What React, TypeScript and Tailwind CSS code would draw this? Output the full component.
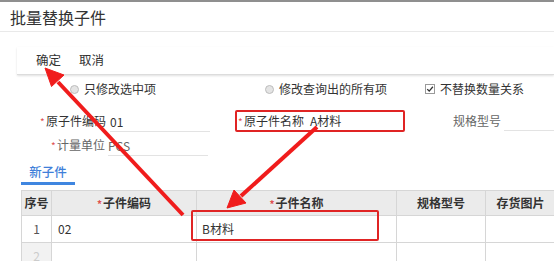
import React from 'react'

const font = { fontFamily: '"Noto Sans CJK SC", "Noto Sans", sans-serif' }

function Radio() {
  return <span className="inline-block w-[9px] h-[9px] rounded-full border border-[#bdbdbd] bg-[#e4e4e4]" />
}

function Checkbox() {
  return (
    <span className="inline-flex items-center justify-center w-[10px] h-[10px] border border-[#9a9a9a] bg-white">
      <svg viewBox="0 0 10 10" className="w-[8px] h-[8px]">
        <path d="M1.5 5.2 L4 7.6 L8.6 2.2" fill="none" stroke="#333" strokeWidth="1.6" />
      </svg>
    </span>
  )
}

function Star() {
  return <span className="text-[#e05050] text-[10px] w-[6px]">*</span>
}

function Arrows() {
  return (
    <svg className="absolute left-0 top-0 pointer-events-none" width="554" height="261">
      <g fill="#f01c1c" stroke="#f01c1c" strokeLinejoin="round">
        <line x1="183" y1="215" x2="58" y2="82" strokeWidth="4" />
        <polygon points="45,68 64,75 51.5,86.5" strokeWidth="1" />
        <line x1="317" y1="127" x2="241" y2="196" strokeWidth="4" />
        <polygon points="227,208 234,190 246,203" strokeWidth="1" />
      </g>
    </svg>
  )
}

export default function App() {
  return (
    <div className="relative w-[554px] h-[261px] overflow-hidden bg-white text-[#333]" style={font}>
      <div className="h-[2px] bg-[#8f8f8f]" />
      {/* Title */}
      <div className="h-[30px] pl-[10px] flex items-center text-[16px] border-b border-[#e9e9e9]">
        批量替换子件
      </div>

      {/* Toolbar */}
      <div className="ml-[17px] mt-[15px] h-[28px] pl-[19px] flex items-center gap-[18px] text-[12.5px] border-b border-[#dcdcdc] shadow-[0_1px_2px_rgba(0,0,0,0.12)]">
        <span>确定</span>
        <span>取消</span>
      </div>

      {/* Options */}
      <div className="mt-[5px] h-[18px] pl-[70px] flex items-center text-[12px]">
        <div className="w-[195px] flex items-center gap-[5px]">
          <Radio />
          <span>只修改选中项</span>
        </div>
        <div className="w-[160px] flex items-center gap-[5px]">
          <Radio />
          <span>修改查询出的所有项</span>
        </div>
        <div className="flex items-center gap-[5px]">
          <Checkbox />
          <span>不替换数量关系</span>
        </div>
      </div>

      {/* Fields row 1 */}
      <div className="mt-[12px] h-[22px] flex items-center text-[12px]">
        <div className="w-[106px] flex items-center justify-end">
          <Star />
          <span>原子件编码</span>
        </div>
        <div className="ml-[4px] w-[100px] h-[22px] pt-[3px] border-b border-[#e3e3e3] flex items-center">01</div>
        <div className="ml-[25px] w-[170px] h-[22px] border-2 border-[#e02424] rounded-[2px] flex items-center pl-[1px]">
          <Star />
          <span>原子件名称</span>
          <span className="ml-[6px]">A材料</span>
        </div>
        <div className="ml-[48px] flex items-center text-[#666]">规格型号</div>
        <div className="ml-[3px] flex-1 h-[20px] border-b border-[#e3e3e3]" />
      </div>

      {/* Fields row 2 */}
      <div className="mt-[2px] h-[22px] flex items-center text-[12px] text-[#666]">
        <div className="w-[105px] flex items-center justify-end">
          <Star />
          <span>计量单位</span>
        </div>
        <div className="ml-[3px] w-[100px] h-[22px] pt-[3px] border-b border-[#e3e3e3] flex items-center">PCS</div>
      </div>

      {/* Tab */}
      <div className="mt-[3px] ml-[21px] w-[54px] h-[26px] pt-[3px] flex items-center justify-center text-[12.5px] font-medium text-[#3f7fd9] border-b-[3px] border-[#3f86e0]">
        新子件
      </div>

      {/* Table */}
      <div className="mt-[5px] ml-[21px] grid grid-cols-[30px_145px_200px_89px_69px] text-[12px] border-t border-l border-[#d6d6d6]">
        <div className="h-[25px] bg-[#ebebeb] border-r border-b border-[#d6d6d6] flex items-center justify-center font-bold">序号</div>
        <div className="h-[25px] bg-[#ebebeb] border-r border-b border-[#d6d6d6] flex items-center justify-center font-bold">
          <Star />子件编码
        </div>
        <div className="h-[25px] bg-[#ebebeb] border-r border-b border-[#d6d6d6] flex items-center justify-center font-bold">
          <Star />子件名称
        </div>
        <div className="h-[25px] bg-[#ebebeb] border-r border-b border-[#d6d6d6] flex items-center justify-center font-bold">规格型号</div>
        <div className="h-[25px] bg-[#ebebeb] border-b border-[#d6d6d6] flex items-center justify-center font-bold">存货图片</div>

        <div className="h-[27px] border-r border-b border-[#d6d6d6] flex items-center justify-center text-[#555]">1</div>
        <div className="h-[27px] border-r border-b border-[#d6d6d6] flex items-center pl-[6px]">02</div>
        <div className="h-[27px] border-r border-b border-[#d6d6d6] flex items-center pl-[5px]">B材料</div>
        <div className="h-[27px] border-r border-b border-[#d6d6d6]" />
        <div className="h-[27px] border-b border-[#d6d6d6]" />

        <div className="h-[20px] pt-[4px] bg-[#f2f2f2] border-r border-[#d6d6d6] flex items-start justify-center text-[#ccc]">2</div>
        <div className="h-[20px] border-r border-[#d6d6d6]" />
        <div className="h-[20px] border-r border-[#d6d6d6]" />
        <div className="h-[20px] border-r border-[#d6d6d6]" />
        <div className="h-[20px]" />
      </div>

      {/* Highlight on the new name cell */}
      <div className="absolute left-[191px] top-[210px] w-[188px] h-[31px] border-2 border-[#e02424] rounded-[2px]" />

      <Arrows />
    </div>
  )
}
